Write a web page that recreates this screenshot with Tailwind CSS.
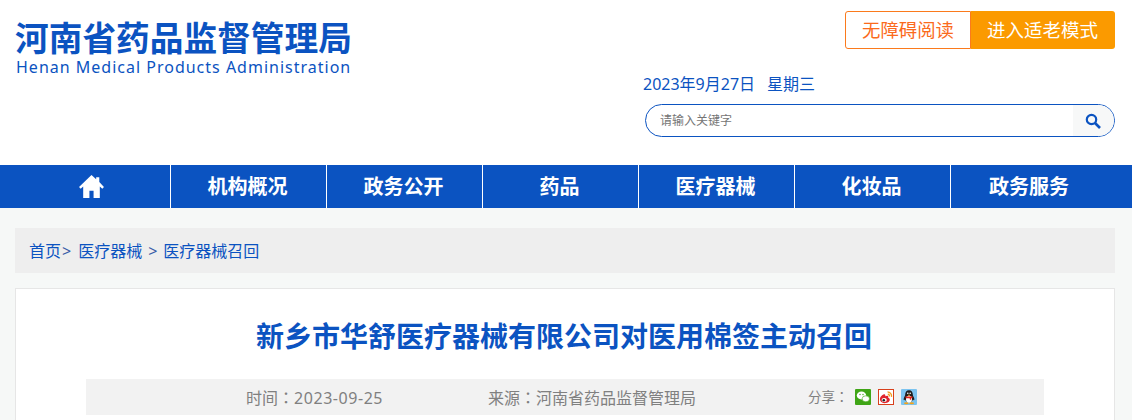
<!DOCTYPE html>
<html lang="zh-CN">
<head>
    <meta charset="UTF-8">
    <title>河南省药品监督管理局</title>
    <script src="https://cdn.jsdelivr.net/npm/@tailwindcss/browser@4"></script>
</head>
<body class="bg-[#f6f8f7] h-[420px] overflow-hidden font-['Noto_Sans','Noto_Sans_CJK_SC',sans-serif]">
    <!-- Header -->
    <header class="bg-white h-[165px] flex justify-between pl-[15px] pr-[17px]">
        <div class="pt-[19px]">
            <div class="text-[33.7px] leading-[39px] font-bold text-[#0b53c1] whitespace-nowrap">河南省药品监督管理局</div>
            <div class="ml-[1px] text-[16px] leading-[18px] tracking-[1px] text-[#0b53c1] whitespace-nowrap">Henan Medical Products Administration</div>
        </div>
        <div class="w-[472px] pt-[11px]">
            <div class="flex justify-end">
                <a class="w-[126px] h-[38px] border border-[#fb7a1c] rounded-l-[3px] bg-white text-[#fb6a1c] text-[18.4px] flex items-center justify-center">无障碍阅读</a>
                <a class="w-[144px] h-[38px] rounded-r-[3px] bg-[#fb9a00] text-white text-[18.5px] flex items-center justify-center pr-[1px]">进入适老模式</a>
            </div>
            <div class="mt-[24px] text-[16px] leading-[22px] text-[#0b53c1] whitespace-nowrap">2023年9月27日<span class="ml-[12px]">星期三</span></div>
            <div class="mt-[9px] ml-[2px] h-[33px] border border-[#0b53c1] rounded-full flex items-center overflow-hidden">
                <span class="flex-1 pl-[14px] text-[12px] text-[#757575]">请输入关键字</span>
                <button class="w-[41px] h-full bg-[#f7f8f8] flex items-center justify-center pr-[2px]">
                    <svg width="16" height="16" viewBox="0 0 16 16" fill="none" stroke="#0b53c1"><circle cx="6.5" cy="6.5" r="4.7" stroke-width="2.2"/><path d="M10 10l5 5" stroke-width="2.6"/></svg>
                </button>
            </div>
        </div>
    </header>

    <!-- Nav -->
    <nav class="bg-[#0b53c1] h-[43px] pl-[15px] flex text-white text-[20px] font-bold">
        <a class="w-[156px] flex items-center justify-center border-r border-white">
            <svg class="-ml-[3px] -mt-[1px]" width="27" height="25" viewBox="0 0 26 24" fill="#fff"><path d="M13 1L1 12.5l1.6 1.600L5 12v11h6v-7h4v7h6V12l2.400 2.100 1.600-1.600L20.500 7.700V3h-3v1.900z"/></svg>
        </a>
        <a class="w-[156px] flex items-center justify-center border-r border-white pr-[2px]">机构概况</a>
        <a class="w-[156px] flex items-center justify-center border-r border-white pr-[2px]">政务公开</a>
        <a class="w-[156px] flex items-center justify-center border-r border-white pr-[2px]">药品</a>
        <a class="w-[156px] flex items-center justify-center border-r border-white pr-[2px]">医疗器械</a>
        <a class="w-[156px] flex items-center justify-center border-r border-white pr-[2px]">化妆品</a>
        <a class="w-[156px] flex items-center justify-center">政务服务</a>
    </nav>

    <main class="pl-[15px] pr-[17px] pt-[20px]">
        <!-- Breadcrumb -->
        <div class="h-[45px] bg-[#eeeeee] pl-[14px] flex items-center text-[16px] text-[#0b53c1] whitespace-nowrap">
            <span>首页</span><span class="text-[#3a5ea8] ml-[1px]">&gt;</span>
            <span class="ml-[7px]">医疗器械</span><span class="text-[#3a5ea8] mx-[6px]">&gt;</span>
            <span>医疗器械召回</span>
        </div>

        <!-- Article card -->
        <div class="mt-[15px] bg-white border border-b-0 border-[#e6e6e6] h-[132px] px-[70px] pt-[27px]">
            <h1 class="text-center text-[28px] leading-[40px] font-bold text-[#0b53c1] whitespace-nowrap pr-[2px]">新乡市华舒医疗器械有限公司对医用棉签主动召回</h1>
            <div class="mt-[23px] h-[36px] bg-[#f2f2f2] flex items-center text-[16px] text-[#808080] whitespace-nowrap">
                <span class="ml-[160px] w-[242px]">时间<span lang="zh-TW" class="font-['Noto_Sans_CJK_TC']">：</span><span class="tracking-[0.55px]">2023-09-25</span></span>
                <span class="w-[320px]">来源<span lang="zh-TW" class="font-['Noto_Sans_CJK_TC']">：</span>河南省药品监督管理局</span>
                <span class="text-[13.5px]">分享<span lang="zh-TW" class="font-['Noto_Sans_CJK_TC']">：</span></span>
                <span class="ml-[6px] flex gap-[7px]">
                    <svg width="16" height="16" viewBox="0 0 16 16"><rect width="16" height="16" rx="1" fill="#3fa516"/><ellipse cx="6.500" cy="6.500" rx="4.700" ry="3.900" fill="#fff"/><ellipse cx="10.800" cy="9.800" rx="3.700" ry="3" fill="#fff" stroke="#3fa516" stroke-width=".6"/><circle cx="5" cy="5.500" r=".7" fill="#3fa516"/><circle cx="8" cy="5.500" r=".7" fill="#3fa516"/></svg>
                    <svg width="16" height="16" viewBox="0 0 16 16"><rect x=".5" y=".5" width="15" height="15" fill="#fff" stroke="#d8401c"/><path d="M6.500 5C3.500 6 1.500 8.500 2 11c.5 2.500 3.500 3.500 6 3 2.500-.5 4-2 3.800-3.500-.1-1-1-1.500-1.600-1.700.3-1 .1-1.800-.7-2-1-.2-1.800.4-2.200.5.200-.7.100-2-.8-1.800z" fill="#e0242c"/><ellipse cx="6.200" cy="11" rx="2.600" ry="2.100" fill="#fff"/><circle cx="5.800" cy="11.200" r="1.300" fill="#222"/><path d="M9.500 2.800a4.300 4.300 0 0 1 4 5M9.800 5.200a2 2 0 0 1 1.600 2.300" fill="none" stroke="#f59a1a" stroke-width="1.300"/></svg>
                    <svg width="16" height="16" viewBox="0 0 16 16"><rect width="16" height="16" rx="1" fill="#7cc4f0"/><path d="M8 1.200c-2.500 0-3.800 2-3.800 4.300 0 1-.4 1.500-1 2.700-.6 1.200-.8 2.800-.2 3 .3.100.8-.4 1-.8.300 1 1 1.800 1.800 2.300h4.400c.8-.5 1.500-1.300 1.800-2.300.2.400.7.900 1 .8.600-.2.400-1.800-.2-3-.6-1.200-1-1.700-1-2.700 0-2.300-1.300-4.300-3.800-4.300z" fill="#1c1c1c"/><ellipse cx="8" cy="10.200" rx="3" ry="3.400" fill="#fff"/><path d="M4.300 7.600h7.400l-.5 1.600H9.900l.4 2-1.600-.9V9.200H4.800z" fill="#e2231a"/><ellipse cx="5.300" cy="14.300" rx="2.300" ry="1" fill="#f5a31a"/><ellipse cx="10.700" cy="14.300" rx="2.300" ry="1" fill="#f5a31a"/><path d="M6.600 5.800h2.800L8 7.200z" fill="#f5a31a"/><circle cx="6.800" cy="4.300" r=".8" fill="#fff"/><circle cx="9.200" cy="4.300" r=".8" fill="#fff"/></svg>
                </span>
            </div>
        </div>
    </main>
</body>
</html>
